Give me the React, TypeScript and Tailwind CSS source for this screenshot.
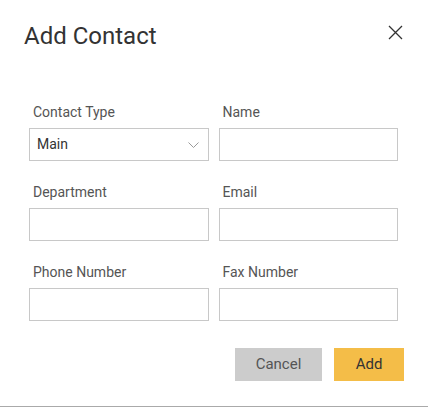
import React, { useState } from "react";

const labelClass = "block pl-1 text-[14px] leading-5 text-[#555555] mb-1.5";
const inputClass =
  "block w-full h-[33px] border border-[#c8c8c8] bg-white px-2 text-[14px] text-[#333333] outline-none";

function Field({ label, value, onChange }: { label: string; value: string; onChange: (v: string) => void }) {
  return (
    <div>
      <label className={labelClass}>{label}</label>
      <input type="text" value={value} onChange={(e) => onChange(e.target.value)} className={inputClass} />
    </div>
  );
}

export default function App() {
  const [contactType, setContactType] = useState("Main");
  const [name, setName] = useState("");
  const [department, setDepartment] = useState("");
  const [email, setEmail] = useState("");
  const [phone, setPhone] = useState("");
  const [fax, setFax] = useState("");

  return (
    <div
      className="h-[407px] w-[428px] bg-white border-b border-[#aaaaaa] relative"
      style={{ fontFamily: "Roboto, 'Liberation Sans', sans-serif" }}
    >
      <div className="flex items-start justify-between pl-6 pr-[25px] pt-5">
        <h2 className="text-[24px] leading-8 text-[#333333] font-normal">Add Contact</h2>
        <button type="button" className="mt-[5px] text-[#333333]" aria-label="Close">
          <svg width="15" height="15" viewBox="0 0 15 15" fill="none" stroke="currentColor" strokeWidth="1.3">
            <path d="M1 1 L14 14 M14 1 L1 14" />
          </svg>
        </button>
      </div>

      <form className="mt-[50px] ml-[29px] w-[369px] grid grid-cols-2 gap-x-[10px] gap-y-[21px]">
        <div>
          <label className={labelClass}>Contact Type</label>
          <div className="relative">
            <select
              value={contactType}
              onChange={(e) => setContactType(e.target.value)}
              className={inputClass + " appearance-none pl-[7px]"}
            >
              <option>Main</option>
              <option>Billing</option>
              <option>Shipping</option>
            </select>
            <svg
              className="pointer-events-none absolute right-[10px] top-[14px]"
              width="11"
              height="6"
              viewBox="0 0 11 6"
              fill="none"
              stroke="#9a9a9a"
              strokeWidth="1"
            >
              <path d="M0.5 0.5 L5.5 5.5 L10.5 0.5" />
            </svg>
          </div>
        </div>
        <Field label="Name" value={name} onChange={setName} />
        <Field label="Department" value={department} onChange={setDepartment} />
        <Field label="Email" value={email} onChange={setEmail} />
        <Field label="Phone Number" value={phone} onChange={setPhone} />
        <Field label="Fax Number" value={fax} onChange={setFax} />
      </form>

      <div className="mt-[27px] mr-6 flex justify-end gap-3">
        <button type="button" className="h-[33px] w-[87px] bg-[#cccccc] text-[15px] text-[#555555]">
          Cancel
        </button>
        <button type="button" className="h-[33px] w-[70px] bg-[#f4bd48] text-[15px] text-[#333333]">
          Add
        </button>
      </div>
    </div>
  );
}
